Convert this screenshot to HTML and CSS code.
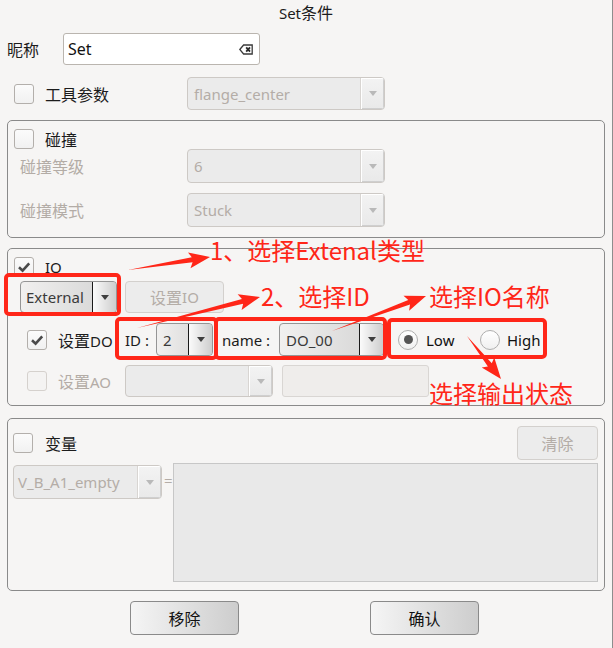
FILE: index.html
```html
<!DOCTYPE html>
<html>
<head>
<meta charset="utf-8">
<link rel="stylesheet" href="styles.css">
</head>
<body>
<div class="dialog">
  <div class="title">Set<span class="zh">条件</span></div>

  <div class="row name-row">
    <span class="nick zh">昵称</span>
    <div class="lineedit">
      <span>Set</span>
      <svg class="clear" width="14" height="11" viewBox="0 0 14 11"><path d="M0.8 5.5 L4.6 1 H13.2 V10 H4.6 Z" fill="none" stroke="#3a3a3a" stroke-width="1.3"/><path d="M7.2 3.3 L11 7.7 M11 3.3 L7.2 7.7" stroke="#2a2a2a" stroke-width="1.8"/></svg>
    </div>
  </div>

  <div class="row tool-row">
    <span class="cb"></span>
    <span class="lbl tool-lbl zh">工具参数</span>
    <div class="combo dis w198"><span class="ctext">flange_center</span><span class="cbtn"><i class="tri"></i></span></div>
  </div>

  <div class="group g1">
    <div class="row cbrow"><span class="cb"></span><span class="lbl zh">碰撞</span></div>
    <div class="row field"><span class="flbl gray zh">碰撞等级</span><div class="combo dis w198 h34"><span class="ctext">6</span><span class="cbtn"><i class="tri"></i></span></div></div>
    <div class="row field f2"><span class="flbl gray zh">碰撞模式</span><div class="combo dis w198 h34"><span class="ctext">Stuck</span><span class="cbtn"><i class="tri"></i></span></div></div>
  </div>

  <div class="group g2">
    <div class="row cbrow"><span class="cb on"><svg width="20" height="20" viewBox="0 0 20 20"><path d="M5 10.2 L8.6 13.6 L15.2 6.4" fill="none" stroke="#4a4a4a" stroke-width="2.6"/></svg></span><span class="lbl">IO</span></div>
    <div class="row ext-row">
      <div class="combo en ext"><span class="ctext">External</span><span class="cbtn"><i class="tri"></i></span></div>
      <div class="btn dis setio"><span class="zh">设置</span>IO</div>
    </div>
    <div class="row do-row">
      <span class="cb on"><svg width="20" height="20" viewBox="0 0 20 20"><path d="M5 10.2 L8.6 13.6 L15.2 6.4" fill="none" stroke="#4a4a4a" stroke-width="2.6"/></svg></span>
      <span class="lbl dolbl"><span class="zh">设置</span>DO</span>
      <span class="idlbl">ID :</span>
      <div class="combo en idc"><span class="ctext">2</span><span class="cbtn"><i class="tri"></i></span></div>
      <span class="namelbl">name :</span>
      <div class="combo en namec"><span class="ctext">DO_00</span><span class="cbtn"><i class="tri"></i></span></div>
      <span class="radio on low"><i></i></span><span class="rlbl lowlbl">Low</span>
      <span class="radio"></span><span class="rlbl highlbl">High</span>
    </div>
    <div class="row ao-row">
      <span class="cb off"></span>
      <span class="lbl dolbl gray"><span class="zh">设置</span>AO</span>
      <div class="combo dis aoc"><span class="ctext"></span><span class="cbtn"><i class="tri"></i></span></div>
      <div class="field-dis"></div>
    </div>
  </div>

  <div class="group g3">
    <div class="row var-row">
      <span class="cb"></span><span class="lbl varlbl zh">变量</span>
      <div class="btn dis clearbtn zh">清除</div>
    </div>
    <div class="row var-body">
      <div class="combo dis varc"><span class="ctext">V_B_A1_empty</span><span class="cbtn"><i class="tri"></i></span></div>
      <span class="eq">=</span>
      <div class="textarea"></div>
    </div>
  </div>

  <div class="row bottom">
    <div class="btn en zh">移除</div>
    <div class="btn en zh">确认</div>
  </div>
</div>

<div class="notes">
  <svg width="613" height="648" viewBox="0 0 613 648">
    <g fill="none" stroke="#ff2618" stroke-width="4">
      <rect x="6" y="275" width="113" height="39" rx="3"/>
      <rect x="117" y="319" width="99" height="39" rx="3"/>
      <rect x="216" y="319" width="169" height="39" rx="3"/>
      <rect x="389" y="320" width="156" height="37" rx="3"/>
    </g>
    <g fill="#ff2618">
      <polygon points="128,270 192.6,262.3 190.5,268.2 210,257 188,252.4 191.8,257.3"/>
      <polygon points="137,328 243.15,303.83 241.59,309.89 260,297 237.67,294.37 241.93,298.98"/>
      <polygon points="332,331 410,304.62 409.11,310.83 426,296 403.53,295.83 408.26,299.94"/>
      <polygon points="467,336 487.88,366.42 481.7,367.47 501,379 494.26,357.55 491.8,363.32"/>
    </g>
  </svg>
  <span class="note n1">1、选择Extenal类型</span>
  <span class="note n2">2、选择ID</span>
  <span class="note n3">选择IO名称</span>
  <span class="note n4">选择输出状态</span>
</div>
</body>
</html>
```

FILE: styles.css
```css
* { box-sizing: border-box; }
html, body { margin: 0; padding: 0; }
body {
  width: 613px;
  height: 648px;
  background: #f6f5f4;
  font-family: "Noto Sans", "Noto Sans CJK SC", sans-serif;
  font-size: 15px;
  color: #1c1c1c;
  position: relative;
  overflow: hidden;
}
.zh { font-size: 16px; }
.dialog {
  width: 613px;
  height: 648px;
  border-right: 1px solid #8d8d8d;
  display: flex;
  flex-direction: column;
}
.row { display: flex; align-items: center; }
.title { height: 27px; line-height: 26px; text-align: center; }

.name-row { margin-top: 6px; height: 32px; }
.nick { width: 63px; padding-left: 7px; }
.lineedit {
  width: 197px; height: 32px;
  background: #fff;
  border: 1px solid #bab5af;
  border-radius: 3px;
  display: flex; align-items: center; justify-content: space-between;
  padding: 0 6px 0 4px;
  color: #111;
  font-size: 16px;
}

.tool-row { margin-top: 12px; height: 33px; padding-left: 14px; }
.cb {
  width: 20px; height: 20px; flex: none;
  border: 1px solid #b3afab;
  border-radius: 3px;
  background: linear-gradient(#fbfbfb, #f1f1f1);
  display: block;
  position: relative;
}
.cb svg { position: absolute; left: -1px; top: -1px; }
.cb.off { border-color: #d5d1cd; background: #f4f3f2; }
.lbl { margin-left: 11px; }
.tool-lbl { width: 142px; }

.combo {
  display: flex; flex: none;
  border-radius: 4px;
  height: 33px;
  overflow: hidden;
}
.combo .ctext { flex: 1; display: flex; align-items: center; padding-left: 6px; white-space: nowrap; overflow: hidden; }
.combo .cbtn { width: 24px; display: flex; align-items: center; justify-content: center; flex: none; }
.tri { display: block; width: 0; height: 0; border-left: 4px solid transparent; border-right: 4px solid transparent; border-top: 5px solid #b9b9b9; }
.combo.dis { background: #ebebeb; border: 1px solid #cdc9c5; color: #b4ada7; }
.combo.dis .cbtn { background: linear-gradient(#f3f3f3, #e9e9e9); border-left: 1px solid #d8d5d2; box-shadow: inset 1px 1px 0 #fff, inset -1px -1px 0 #cfcfcf; }
.combo.en { border: 1px solid #959595; background: linear-gradient(90deg, #f1f0ef, #d3d3d3); color: #3a3a3a; }
.combo.en .cbtn { border-left: 1.5px solid #1a1a1a; background: linear-gradient(90deg, #fbfbfb, #cdcdcd); }
.combo.en .tri { border-top-color: #3e3e3e; }
.w198 { width: 198px; }
.h34 { height: 34px; }

.group {
  margin: 0 7px;
  border: 1px solid #8a8a8a;
  border-radius: 5px;
  display: flex; flex-direction: column;
  padding-left: 6px;
}
.cbrow { height: 20px; }
.g1 { margin-top: 10px; height: 118px; padding-top: 8px; }
.field { height: 34px; }
.field.f2 { margin-top: 10px; }
.flbl { margin-left: 6px; width: 167px; }
.gray { color: #b3aca6; }

.g2 { margin-top: 10px; height: 158px; padding-top: 8px; }
.ext-row { margin-top: 4px; height: 32px; padding-left: 6px; }
.ext { width: 97px; height: 32px; }
.ext .ctext { padding-left: 5px; }
.btn {
  display: flex; align-items: center; justify-content: center;
  border-radius: 4px; flex: none;
}
.btn.dis { background: #ececec; border: 1px solid #d3d0cd; color: #b4ada7; }
.setio { margin-left: 8px; width: 99px; height: 32px; }
.do-row { margin-top: 10px; height: 33px; }
.do-row .cb, .ao-row .cb { margin-left: 13px; }
.dolbl { width: 67px; white-space: nowrap; }
.idlbl { width: 31px; }
.idc { width: 57px; }
.namelbl { margin-left: 9px; width: 57px; }
.namec { width: 105px; }
.radio {
  width: 20px; height: 20px; flex: none;
  border-radius: 50%;
  border: 1px solid #aeaeae;
  background: linear-gradient(#ffffff, #f0f0f0);
  display: flex; align-items: center; justify-content: center;
}
.radio.low { margin-left: 14px; }
.radio i { display: block; width: 9px; height: 9px; border-radius: 50%; background: #555; }
.rlbl { color: #111; }
.lowlbl { margin-left: 8px; width: 54px; }
.highlbl { margin-left: 7px; }
.ao-row { margin-top: 9px; height: 32px; }
.aoc { width: 148px; height: 32px; }
.field-dis { margin-left: 9px; width: 147px; height: 32px; background: #efedeb; border: 1px solid #d9d6d3; border-radius: 3px; }

.g3 { margin-top: 12px; height: 173px; padding: 7px 6px 0 5px; }
.var-row { height: 34px; }
.varlbl { margin-left: 12px; }
.clearbtn { margin-left: auto; width: 81px; height: 34px; }
.var-body { margin-top: 3px; align-items: flex-start; height: 119px; }
.varc { width: 149px; height: 34px; margin-top: 2px; }
.varc .ctext { padding-left: 4px; }
.eq { margin-left: 2px; width: 9px; color: #b4ada7; margin-top: 9px; line-height: 16px; }
.textarea { width: 426px; height: 119px; background: #e9e9e9; border: 1px solid #c7c7c7; }

.bottom { margin-top: 10px; height: 34px; padding-left: 130px; gap: 131px; }
.btn.en {
  width: 109px; height: 34px;
  border: 1px solid #8a8a8a;
  background: linear-gradient(90deg, #f5f5f5, #cdcdcd);
  color: #111;
}

.notes { position: absolute; left: 0; top: 0; width: 613px; height: 648px; pointer-events: none; }
.notes svg { position: absolute; left: 0; top: 0; }
.note {
  position: absolute;
  font-family: "Noto Sans CJK SC", sans-serif;
  font-size: 24px;
  line-height: 24px;
  color: #ff2618;
  white-space: nowrap;
}
.n1 { left: 210px; top: 238px; }
.n2 { left: 261px; top: 284px; }
.n3 { left: 429px; top: 284px; }
.n4 { left: 429px; top: 381px; }
```
